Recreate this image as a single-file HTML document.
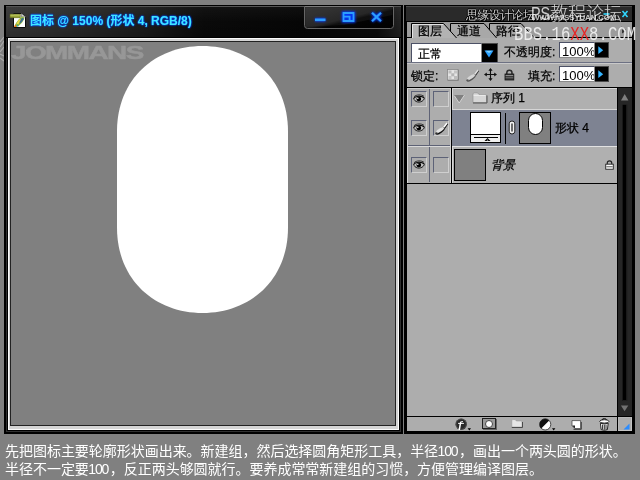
<!DOCTYPE html>
<html lang="zh">
<head>
<meta charset="utf-8">
<title>图标</title>
<style>
*{margin:0;padding:0;box-sizing:border-box}
html,body{width:640px;height:480px;overflow:hidden;background:#808080}
body{position:relative;font-family:"Liberation Sans","Noto Sans CJK SC",sans-serif;font-size:12px;color:#000}
#pan{font-family:"Liberation Sans","WenQuanYi Zen Hei",sans-serif}
.a{position:absolute}
#win,#pan,#w1,#w2{will-change:transform}
/* document window */
#win{left:4px;top:5px;width:399px;height:429px;background:#000}
#tbar{left:2px;top:1px;width:395px;height:31px;background:linear-gradient(180deg,rgba(255,255,255,.04) 0,rgba(255,255,255,0) 50%,rgba(0,0,0,.18) 100%),linear-gradient(90deg,#363636 0,#303030 10%,#1c1c1c 35%,#0a0a0a 50%,#060606 75%,#0c0c0c 94%,#222 100%);border-top:1px solid #555}
#frame{left:4px;top:33px;width:391px;height:392px;background:#d4d4d4;border:1px solid #fbfbfb}
#canvas{left:7px;top:37px;width:384px;height:383px;background:#808080;overflow:hidden;outline:1px solid #222}
#pill{left:106px;top:4px}
#title{left:26px;top:8px;height:16px;line-height:16px;font-size:12px;font-weight:bold;color:#3fe6ff;white-space:nowrap;text-shadow:0 0 1px #0058ff,0 0 2px #0048ff,0 0 2px #0040ff}
#wm{left:0px;top:0px;font-size:18px;line-height:22px;font-weight:bold;color:#979797;letter-spacing:-1px;white-space:nowrap;transform:scaleX(1.55);transform-origin:0 0;-webkit-text-stroke:.4px #979797}
#btns{left:300px;top:1px;width:90px;height:24px}
/* caption */
#cap{will-change:transform;left:5px;top:442px;width:640px;font-size:14px;line-height:18px;color:#fff;white-space:nowrap;letter-spacing:-0.03px}
#cap .n{display:inline-block;letter-spacing:-1.2px;margin-left:-.5px;margin-right:1.7px}
/* panel */
#pan{left:404px;top:5px;width:231px;height:429px;background:#000}

#ptitle{left:2px;top:1px;width:226px;height:15px;background:#2a2a2a;border-top:1px solid #4c4c4c;overflow:hidden}
#pbody{left:3px;top:17px;width:225px;height:409px;background:#adadad;overflow:hidden}
.t12{font-size:12px;line-height:14px;white-space:nowrap;-webkit-text-stroke:.25px #000}
#tabs{left:0;top:0;width:225px;height:16px;background:#9c9c9c;border-bottom:1px solid #000}
#opts{left:0;top:16px;width:225px;height:54px;background:#adadad}
.inp{background:#fff;border:1px solid #4c5166;border-right-color:#8a8a8a;border-bottom-color:#8a8a8a;overflow:hidden}
.inp span{position:absolute;left:2px;top:1px;font-size:13px;line-height:15px}
.abtn{background:#000;border:1px solid #4a4a4a;border-left:none}
.sep{left:0;width:225px;height:2px;border-top:1px solid #6d7183;border-bottom:1px solid #c9c9c9}
#list{left:0;top:65px;width:210px;height:97px;background:#adadad}
.row{left:0;width:210px}
.eye{width:16px;height:16px;border:1px solid #5d6277;border-right-color:#cfcfcf;border-bottom-color:#cfcfcf}
#sbar{left:210px;top:65px;width:15px;height:329px;background:#262626;border-top:1px solid #000}
#foot{left:0;top:394px;width:225px;height:15px;background:#adadad;border-top:1px solid #000}
#pt1{left:60px;top:2px;font-size:12px;line-height:13px;color:#cfcfcf;letter-spacing:-.6px;white-space:nowrap;text-shadow:1px 1px 0 #000,-1px 0 0 #000,0 -1px 0 #000}
#pt2{left:126px;top:6px;font-size:8px;line-height:9px;color:#c4c4c4;font-weight:bold;white-space:nowrap;text-shadow:1px 1px 0 #000;letter-spacing:-.2px}
#w1{left:531px;top:4px;font-size:18px;line-height:20px;color:#fff;white-space:nowrap;letter-spacing:0;font-family:"Liberation Sans","Noto Sans CJK SC",sans-serif;font-weight:300;opacity:.78}
#w2{left:513.5px;top:24px;font-size:15.65px;line-height:18px;color:#f4f4f4;white-space:nowrap;font-family:"Liberation Mono",monospace;transform:scaleY(1.26);transform-origin:0 0;opacity:.9}
#w2 b{color:#f01818;font-weight:normal}
</style>
</head>
<body>
<svg class="a" style="left:0;top:36px" width="5" height="26" viewBox="0 0 5 26"><path d="M0 6 L4 1 M0 11 L4 5 M0 16 L4 11 M0 18 L4 20 M0 22 L4 25" stroke="#a8a8a8" stroke-width="1.2" fill="none"/></svg>
<div id="win" class="a">
  <div id="tbar" class="a"></div>
  <div id="btns" class="a">
    <svg class="a" style="left:0;top:0" width="90" height="24" viewBox="0 0 90 24">
      <defs><filter id="gl" x="-30%" y="-50%" width="160%" height="200%"><feGaussianBlur stdDeviation="1.3"/></filter>
      <linearGradient id="gs" x1="0" y1="0" x2="1" y2="1"><stop offset="0" stop-color="#2e2e2e"/><stop offset=".5" stop-color="#1c1c1c"/><stop offset=".58" stop-color="#040404"/><stop offset="1" stop-color="#000"/></linearGradient></defs>
      <path d="M0.5 0.5 V19.5 Q0.5 22.5 3.5 22.5 H86.5 Q89.5 22.5 89.5 19.5 V0.5 Z" fill="url(#gs)" stroke="#666"/>
      <path d="M1 0.5 H89" stroke="#7a7a7a"/>
      <path d="M1.5 1.5 H88.5 V9 L40 19 L1.5 21 Z" fill="#fff" opacity=".05"/>
      <g fill="none" stroke="#0038ff" stroke-width="3.6" filter="url(#gl)" transform="translate(0 -.5)">
        <path d="M11 14.3 H21.5"/><path d="M39.5 7.5 H49.5 V15.5 H39.5 Z M39.5 11.2 H45.6 V15.5"/><path d="M68 7.2 L77 15.8 M77 7.2 L68 15.8"/>
      </g>
      <g fill="none" stroke="#2c9dff" stroke-width="2" transform="translate(0 -.5)">
        <path d="M11 14.3 H21.5" stroke-width="2.6"/><path d="M39.5 7.5 H49.5 V15.5 H39.5 Z M39.5 11.2 H45.6 V15.5" stroke-width="1.8"/><path d="M68 7.2 L77 15.8 M77 7.2 L68 15.8" stroke-width="2.2"/>
      </g>
    </svg>
  </div>
  <svg class="a" style="left:5px;top:7px" width="18" height="17" viewBox="0 0 18 17">
    <path d="M4.5 1.5 H12.5 L16.5 5 V15.5 H4.5 Z" fill="#fff" stroke="#0c0c0c" stroke-width="1"/>
    <path d="M12.5 1.5 V5 H16.5" fill="#d0d0d0" stroke="#666" stroke-width=".6"/>
    <path d="M14 4.4 C10.4 5.6 6.8 10.2 5.2 14.8 L7.6 15 C11 13.4 14.6 9.4 15.4 6 Z" fill="#8cb63a"/>
    <path d="M13 6 C11.6 7.6 10.6 9.6 10.2 12 C12.2 10.6 14.2 8.2 15 6.4 Z" fill="#3a6c98"/>
    <path d="M10.4 7.2 C8.8 8.8 7.8 10.4 7.4 12.2 L10 11.8 C10.2 10.2 10.8 8.8 11.8 7.6 Z" fill="#e6da4a"/>
    <path d="M6.4 12.2 L5 15 L7.4 14.9 Z" fill="#f0701c"/>
    <path d="M7.6 13.8 L9.6 14.9 L8.4 12.6Z" fill="#2d8fd0"/>
    <rect x="1" y="2.2" width="10.2" height="3.6" fill="#98a437" stroke="#5c651d" stroke-width=".6"/>
    <rect x="1.4" y="2.6" width="9.4" height="1.1" fill="#bcc760"/>
  </svg>
  <div id="title" class="a">图标 @ 150% (形状 4, RGB/8)</div>
  <div class="a" style="left:2px;top:33px;width:395px;height:394px;border:1px solid #303030;border-top:none"></div>
  <div id="frame" class="a"></div>
  <div id="canvas" class="a">
    <div id="wm" class="a">JOMMANS</div>
    <svg id="pill" class="a" width="171" height="267" viewBox="0 0 171 267"><path d="M0,85.5 C0,32.5 38.5,0 85.5,0 C132.5,0 171,32.5 171,85.5 V181.5 C171,234.5 132.5,267 85.5,267 C38.5,267 0,234.5 0,181.5 Z" fill="#fff"/></svg>
  </div>
</div>
<div id="pan" class="a">
  <div id="ptitle" class="a"><div id="pt1" class="a">思缘设计论坛</div><div id="pt2" class="a">WWW.MISSYUAN.COM</div>
    <svg class="a" style="left:196px;top:2px" width="30" height="12" viewBox="0 0 30 12"><path d="M1.5 5 H7.5" stroke="#30d8ff" stroke-width="1.6"/><path d="M20.5 2 L25.5 8 M25.5 2 L20.5 8" stroke="#30d8ff" stroke-width="1.5"/></svg></div>
  <div id="pbody" class="a">
    <div id="tabs" class="a">
      <svg class="a" style="left:0;top:0" width="225" height="17" viewBox="0 0 225 17">
        <path d="M82.5 16.5 L82.5 1.5 L114 1.5 L128 16.5 Z" fill="#a8a8a8" stroke="#000"/>
        <path d="M43.5 16.5 L43.5 1.5 L77 1.5 L90 16.5 Z" fill="#a8a8a8" stroke="#000"/>
        <path d="M0 16.5 L4.5 16.5 L4.5 1.5 L36.5 1.5 L50 16.5" fill="#b3b3b3" stroke="#000"/>
        <path d="M5.5 16 L5.5 2.5 L36 2.5" fill="none" stroke="#e4e4e4"/>
        <rect x="5" y="16" width="44" height="1" fill="#b3b3b3"/>
      </svg>
      <svg class="a" style="left:213px;top:4px" width="8" height="9" viewBox="0 0 8 9"><path d="M2 3.2 L5.2 5.4 L2 7.6 Z" fill="#333"/><path d="M1.5 1 L5.5 3.6" stroke="#444" stroke-width="1"/></svg>
      <div class="a t12" style="left:11px;top:2px">图层</div>
      <div class="a t12" style="left:50px;top:2px">通道</div>
      <div class="a t12" style="left:89px;top:2px">路径</div>
    </div>
    <div id="opts" class="a">
      <div class="a inp" style="left:4px;top:5px;width:71px;height:20px"><span class="t12" style="left:6px;top:3px;font-size:12px">正常</span></div>
      <div class="a abtn" style="left:75px;top:5px;width:16px;height:20px"><svg class="a" style="left:2px;top:6px" width="10" height="8"><path d="M0.5 0.5 H9.5 L5 7.5 Z" fill="#2aa0ff"/><path d="M1.5 0.8 H8.5 L5 3 Z" fill="#7fd4ff"/></svg></div>
      <div class="a t12" style="left:97px;top:7px">不透明度:</div>
      <div class="a inp" style="left:152px;top:4px;width:36px;height:16px"><span>100%</span></div>
      <div class="a abtn" style="left:188px;top:4px;width:14px;height:16px"><svg class="a" style="left:3px;top:3px" width="6" height="9"><path d="M0.3 0.3 L5.2 4.2 L0.3 8 Z" fill="#35b4ff"/></svg></div>
      <div class="a sep" style="top:24px"></div>
      <div class="a t12" style="left:4px;top:31px">锁定:</div>
      <svg class="a" style="left:40px;top:31px" width="12" height="12" viewBox="0 0 12 12"><rect x=".5" y=".5" width="10.5" height="10.5" fill="#e4e4e4" stroke="#8a8a8a" stroke-width=".8"/><rect x="1.5" y="1.5" width="3" height="3" fill="#bcbcbc"/><rect x="7" y="1.5" width="3" height="3" fill="#c4c4c4"/><rect x="4.3" y="4.3" width="3" height="3" fill="#b4b4b4"/><rect x="1.5" y="7" width="3" height="3" fill="#c4c4c4"/><rect x="7" y="7" width="3" height="3" fill="#bcbcbc"/><path d="M.8 11.4 H11.4 V.8" fill="none" stroke="#808080" stroke-width=".9"/></svg>
      <svg class="a" style="left:58px;top:30px" width="15" height="14" viewBox="0 0 15 14"><path d="M13.6 2.6 L10.6 7" stroke="#333" stroke-width="1.4"/><path d="M13 2 L9.8 6.4" stroke="#e0e0e0" stroke-width="1.4"/><g transform="rotate(-35 6 9.6)"><ellipse cx="6" cy="10.1" rx="5.3" ry="2.1" fill="#555"/><ellipse cx="6.2" cy="9.2" rx="4.8" ry="1.7" fill="#d6d6d6"/><ellipse cx="1.6" cy="9.8" rx="1.2" ry="1" fill="#555"/></g></svg>
      <svg class="a" style="left:77px;top:30px" width="13" height="13" viewBox="0 0 13 13"><path d="M6.5 1 V12 M1 6.5 H12" stroke="#111" stroke-width="1.1"/><path d="M6.5 0 L8.6 2.8 H4.4 Z M6.5 13 L8.6 10.2 H4.4 Z M0 6.5 L2.8 4.4 V8.6 Z M13 6.5 L10.2 4.4 V8.6 Z" fill="#111"/></svg>
      <svg class="a" style="left:97px;top:31px" width="11" height="12" viewBox="0 0 11 12"><path d="M2.8 5.4 V3.8 Q2.8 1.2 5.4 1.2 Q8 1.2 8 3.8 V5.4" fill="none" stroke="#2a2a2a" stroke-width="1.5"/><rect x="1" y="5" width="8.8" height="6" fill="#3a3a3a" stroke="#111" stroke-width=".8"/><rect x="1.6" y="6" width="7.6" height="1" fill="#8a8a8a"/><rect x="1.6" y="8.2" width="7.6" height="1" fill="#6a6a6a"/></svg>
      <div class="a t12" style="left:121px;top:31px">填充:</div>
      <div class="a inp" style="left:152px;top:28px;width:36px;height:16px"><span>100%</span></div>
      <div class="a abtn" style="left:188px;top:28px;width:14px;height:16px"><svg class="a" style="left:3px;top:3px" width="6" height="9"><path d="M0.3 0.3 L5.2 4.2 L0.3 8 Z" fill="#35b4ff"/></svg></div>
    </div>
    <div id="list" class="a">
      <div class="a" style="left:0;top:0;width:210px;height:1px;background:#000"></div>
      <div class="a" style="left:0;top:1px;width:1px;height:95px;background:#d9d9d9"></div>
      <div class="a" style="left:0;top:1px;width:45px;height:1px;background:#cfcfcf"></div>
      <div class="a" style="left:22px;top:2px;width:1px;height:56px;background:#5e6275"></div>
      <div class="a" style="left:22px;top:60px;width:1px;height:35px;background:#5e6275"></div>
      <div class="a" style="left:1px;top:58px;width:43px;height:1px;background:#5e6275"></div>
      <div class="a" style="left:1px;top:59px;width:43px;height:1px;background:#d9d9d9"></div>
      <div class="a" style="left:43px;top:1px;width:1px;height:95px;background:#d0d0d0"></div>
      <div class="a" style="left:44px;top:1px;width:1px;height:95px;background:#000"></div>
      <div class="a eye" style="left:4px;top:4px"><svg class="a" style="left:1px;top:2px" width="12" height="10" viewBox="0 0 12 10"><path d="M1 2.8 C3.2 0.4 8.6 0.3 11 2.4" fill="none" stroke="#111" stroke-width=".8"/><path d="M0.4 4.6 C2.6 1.7 8.8 1.5 11.6 4.3" fill="none" stroke="#000" stroke-width="1.1"/><path d="M0.9 5.3 C3 9.2 9.2 9 11.4 4.7" fill="none" stroke="#111" stroke-width=".9"/><path d="M2 5 C4 2.6 8 2.6 10.4 4.8 C8.4 7.6 4 7.8 2 5Z" fill="#c8c8c8"/><ellipse cx="5.8" cy="5" rx="2.4" ry="2.3" fill="#000"/><circle cx="4.8" cy="4.3" r=".75" fill="#fff"/></svg></div>
      <div class="a eye" style="left:26px;top:4px"></div>
      <div class="a eye" style="left:4px;top:33px"><svg class="a" style="left:1px;top:2px" width="12" height="10" viewBox="0 0 12 10"><path d="M1 2.8 C3.2 0.4 8.6 0.3 11 2.4" fill="none" stroke="#111" stroke-width=".8"/><path d="M0.4 4.6 C2.6 1.7 8.8 1.5 11.6 4.3" fill="none" stroke="#000" stroke-width="1.1"/><path d="M0.9 5.3 C3 9.2 9.2 9 11.4 4.7" fill="none" stroke="#111" stroke-width=".9"/><path d="M2 5 C4 2.6 8 2.6 10.4 4.8 C8.4 7.6 4 7.8 2 5Z" fill="#c8c8c8"/><ellipse cx="5.8" cy="5" rx="2.4" ry="2.3" fill="#000"/><circle cx="4.8" cy="4.3" r=".75" fill="#fff"/></svg></div>
      <div class="a eye" style="left:26px;top:33px"><svg class="a" style="left:0;top:0" width="15" height="14" viewBox="0 0 15 14"><path d="M13.6 2.6 L10.6 7" stroke="#111" stroke-width="1.5"/><path d="M13 2 L9.8 6.4" stroke="#fff" stroke-width="1.5"/><g transform="rotate(-35 6 9.6)"><ellipse cx="6" cy="10.1" rx="5.3" ry="2.1" fill="#111"/><ellipse cx="6.2" cy="9.2" rx="4.8" ry="1.7" fill="#e4e4e4"/><ellipse cx="1.6" cy="9.8" rx="1.2" ry="1" fill="#333"/></g></svg></div>
      <div class="a eye" style="left:4px;top:70px"><svg class="a" style="left:1px;top:2px" width="12" height="10" viewBox="0 0 12 10"><path d="M1 2.8 C3.2 0.4 8.6 0.3 11 2.4" fill="none" stroke="#111" stroke-width=".8"/><path d="M0.4 4.6 C2.6 1.7 8.8 1.5 11.6 4.3" fill="none" stroke="#000" stroke-width="1.1"/><path d="M0.9 5.3 C3 9.2 9.2 9 11.4 4.7" fill="none" stroke="#111" stroke-width=".9"/><path d="M2 5 C4 2.6 8 2.6 10.4 4.8 C8.4 7.6 4 7.8 2 5Z" fill="#c8c8c8"/><ellipse cx="5.8" cy="5" rx="2.4" ry="2.3" fill="#000"/><circle cx="4.8" cy="4.3" r=".75" fill="#fff"/></svg></div>
      <div class="a eye" style="left:26px;top:70px"></div>
      <!-- group row -->
      <div class="a" style="left:45px;top:1px;width:165px;height:22px;background:#b0b0b0;border-top:1px solid #d6d6d6;border-left:1px solid #d6d6d6;border-bottom:1px solid #d6d6d6"></div>
      <svg class="a" style="left:46px;top:7px" width="13" height="10" viewBox="0 0 13 10"><path d="M1 1 H11.5 L6.2 9 Z" fill="#808080"/><path d="M11.5 1 L6.2 9 L1.4 1.8" fill="none" stroke="#d8d8d8" stroke-width=".9"/></svg>
      <svg class="a" style="left:65px;top:5px" width="16" height="13" viewBox="0 0 16 13"><path d="M1 2.2 Q1 .8 2.2 .8 H5.5 L7 2.5 H13.3 Q14.5 2.5 14.5 3.7 V10.5 H1 Z" fill="#d6d6d6" stroke="#8a8a8a" stroke-width=".6"/><path d="M1 11 H15 V3.5" fill="none" stroke="#555" stroke-width="1"/><path d="M1.6 3.4 H13.6" stroke="#f2f2f2" stroke-width=".8"/></svg>
      <div class="a t12" style="left:84px;top:4px">序列 1</div>
      <!-- shape row -->
      <div class="a" style="left:45px;top:23px;width:165px;height:36px;background:#7e8392"></div>
      <div class="a" style="left:45px;top:59px;width:165px;height:1px;background:#e2e2e2"></div>
      <div class="a" style="left:63px;top:25px;width:31px;height:31px;background:#fff;border:1px solid #000">
        <div class="a" style="left:0;top:21px;width:29px;height:8px;background:#f0f0f0;border-top:1px solid #000"></div>
        <div class="a" style="left:3px;top:24px;width:24px;height:1px;background:#000"></div>
        <svg class="a" style="left:13px;top:25px" width="7" height="3"><path d="M3.5 0 L6.5 3 H0.5 Z" fill="#000"/><path d="M3.5 1.6 L4.4 2.6 H2.6 Z" fill="#fff"/></svg>
      </div>
      <div class="a" style="left:98px;top:26px;width:1px;height:31px;background:#000"></div>
      <svg class="a" style="left:101px;top:33px" width="8" height="15" viewBox="0 0 8 15"><rect x="1.2" y="1" width="5.6" height="13" rx="2.8" fill="#f4f4f4" stroke="#222" stroke-width="1"/><rect x="3.3" y="3.2" width="1.4" height="8.6" rx=".7" fill="#333"/></svg>
      <div class="a" style="left:112px;top:25px;width:32px;height:32px;background:#808080;border:1px solid #000">
        <div class="a" style="left:8px;top:0;width:15px;height:22px;border-radius:7.5px;background:#fff;border:1px solid #000"></div>
      </div>
      <div class="a t12" style="left:148px;top:34px">形状 4</div>
      <!-- bg row -->
      <div class="a" style="left:45px;top:60px;width:165px;height:36px;background:#b0b0b0;border-left:1px solid #d6d6d6"></div>
      <div class="a" style="left:47px;top:62px;width:32px;height:32px;background:#808080;border:1px solid #000"></div>
      <div class="a t12" style="left:84px;top:71px;font-style:italic">背景</div>
      <svg class="a" style="left:198px;top:73px" width="9" height="10" viewBox="0 0 10 11"><path d="M2.5 5 V3.5 Q2.5 1 5 1 Q7.5 1 7.5 3.5 V5" fill="none" stroke="#222" stroke-width="1.3"/><rect x=".8" y="4.6" width="8.4" height="5.6" fill="#fff" stroke="#222" stroke-width="1"/><rect x="1.5" y="7" width="7" height="1" fill="#444"/></svg>
      <div class="a" style="left:0;top:96px;width:210px;height:1px;background:#000"></div>
    </div>
    <div id="sbar" class="a">
      <svg class="a" style="left:0;top:0" width="15" height="330" viewBox="0 0 15 330">
        <rect x="0" y="0" width="1" height="330" fill="#000"/>
        <path d="M7.7 6 L11.4 12.4 H4 Z" fill="#7e7e7e"/>
        <rect x="6" y="16.8" width="3.3" height="295.4" fill="#000"/>
        <rect x="5" y="16.8" width="1" height="296" fill="#181818"/>
        <rect x="9.3" y="16.8" width="1" height="296" fill="#1c1c1c"/>
        <path d="M3.9 317.6 H11.3 L7.6 323.2 Z" fill="#727272"/>
      </svg>
    </div>
    <div id="foot" class="a">
      <!-- fx -->
      <svg class="a" style="left:48px;top:1px" width="18" height="13" viewBox="0 0 18 13"><circle cx="6.2" cy="6.2" r="5.7" fill="#2a2a2a"/><circle cx="6.2" cy="6.2" r="5.2" fill="none" stroke="#666" stroke-width=".6"/><text x="3.4" y="9.6" font-family="Liberation Serif,serif" font-style="italic" font-weight="bold" font-size="11" fill="#fff">f</text><path d="M3 5.4 H9" stroke="#fff" stroke-width=".9"/><path d="M12.6 10.3 H16 L14.3 12.4 Z" fill="#000"/></svg>
      <!-- mask -->
      <div class="a" style="left:75px;top:1px;width:14px;height:11px;background:#9a9a9a;border:1px solid #222;box-shadow:1px 1px 0 #666"><div class="a" style="left:2px;top:.5px;width:8px;height:8px;border-radius:4px;background:#fff;border:.5px solid #444"></div></div>
      <!-- folder -->
      <svg class="a" style="left:104px;top:2px" width="13" height="10" viewBox="0 0 13 10"><path d="M.8 1.6 Q.8 .6 1.8 .6 H4.2 L5.4 2 H10 Q11 2 11 3 V8 H.8 Z" fill="#e6e6e6" stroke="#909090" stroke-width=".5"/><path d="M.8 8.5 H11.5 V3" fill="none" stroke="#4a4a4a" stroke-width="1"/></svg>
      <!-- adjustment -->
      <svg class="a" style="left:132px;top:1px" width="18" height="13" viewBox="0 0 18 13"><circle cx="6.2" cy="6.4" r="5.6" fill="#fff" stroke="#222" stroke-width=".8"/><path d="M10.2 2.4 A5.6 5.6 0 0 0 2.2 10.4 Z" fill="#111"/><path d="M13 10.3 H16.4 L14.7 12.4 Z" fill="#000"/></svg>
      <!-- new layer -->
      <svg class="a" style="left:164px;top:3px" width="11" height="10" viewBox="0 0 11 10"><path d="M1 .6 H9.6 V8.6 H4 L1 5.6 Z" fill="#fff" stroke="#333" stroke-width=".7"/><path d="M1 5.6 H4 V8.6 Z" fill="#222"/><path d="M2.5 9.3 H10.3 V2" fill="none" stroke="#333" stroke-width=".9"/></svg>
      <!-- trash -->
      <svg class="a" style="left:192px;top:1px" width="11" height="13" viewBox="0 0 11 13"><path d="M3.2 2 Q3.2 .5 5.3 .5 Q7.4 .5 7.4 2" fill="none" stroke="#111" stroke-width=".9"/><ellipse cx="5.3" cy="3.4" rx="4.6" ry="1.7" fill="#fff" stroke="#111" stroke-width=".9"/><path d="M1.4 5.2 L2.2 11.6 Q5.3 13 8.4 11.6 L9.2 5.2 Q5.3 6.8 1.4 5.2Z" fill="#fff" stroke="#111" stroke-width=".9"/><path d="M3.6 6.6 V11.4 M5.3 6.8 V11.8 M7 6.6 V11.4" stroke="#111" stroke-width=".9"/></svg>
      <div class="a" style="left:210px;top:0;width:1px;height:15px;background:#000"></div>
      <svg class="a" style="left:216px;top:6px" width="7" height="7"><path d="M6.5 0.5 V6.5 H0.5 Z" fill="#2a8cff"/></svg><div class="a" style="left:211px;top:0;width:14px;height:14px;border:1px solid #c4c4c4;border-left-color:#b8b8b8;border-top-color:#b8b8b8"></div>
    </div>
  </div>
</div>
<div id="w1" class="a"><span style="display:inline-block;transform:scaleX(.8);transform-origin:0 50%;margin-right:-5px">PS</span>教程论坛</div>
<div id="w2" class="a">BBS.16<b>XX</b>8.COM</div>
<div id="cap" class="a">先把图标主要轮廓形状画出来。新建组，然后选择圆角矩形工具，半径<span class="n">100</span>，画出一个两头圆的形状。<br>半径不一定要<span class="n">100</span>，反正两头够圆就行。要养成常常新建组的习惯，方便管理编译图层。</div>
</body>
</html>
